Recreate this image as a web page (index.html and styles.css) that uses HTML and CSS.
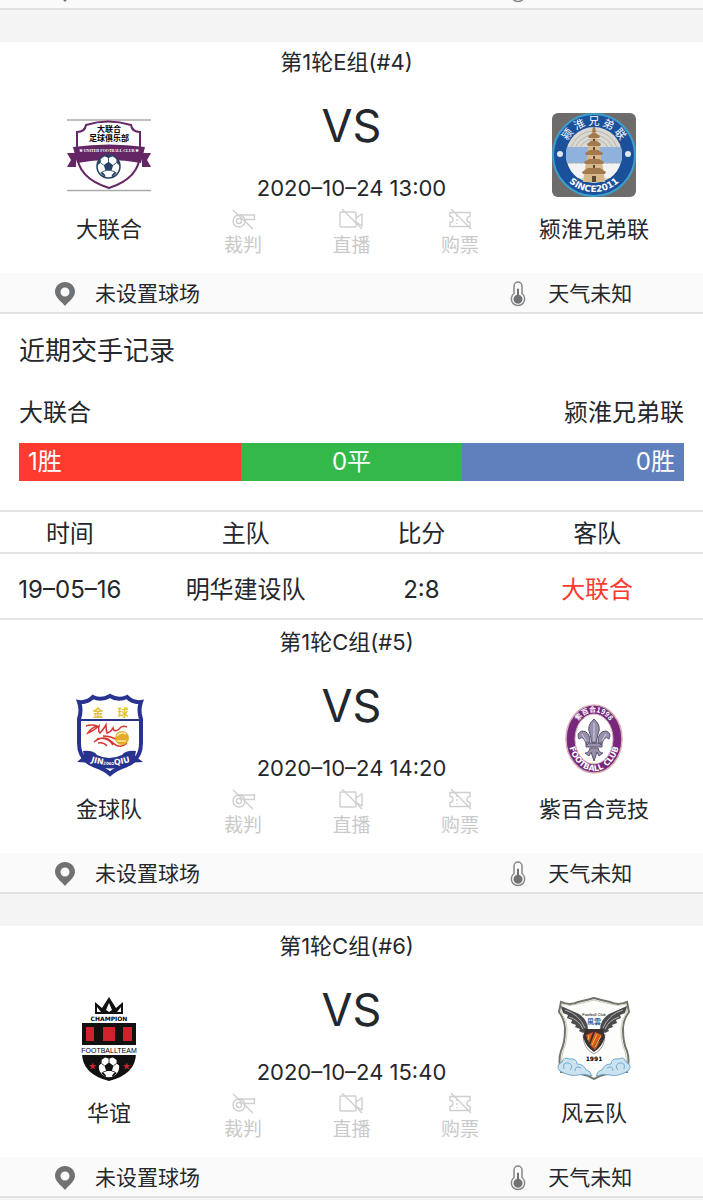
FILE: index.html
```html
<!DOCTYPE html>
<html lang="zh-CN">
<head>
<meta charset="UTF-8">
<meta name="viewport" content="width=device-width, initial-scale=1.0">
<title>赛程</title>
<link rel="stylesheet" href="styles.css">
</head>
<body>

<!-- Shared icons -->
<svg class="sprite" aria-hidden="true">
    <symbol id="pin" viewBox="0 0 20 24">
        <path fill="#707375" fill-rule="evenodd" d="M10 0C4.400 0 0 4.300 0 9.800c0 5.200 5.500 9.200 10 14.200 4.500-5 10-9 10-14.200C20 4.300 15.600 0 10 0zm0 5.500a4.500 4.500 0 1 1 0 9 4.500 4.500 0 0 1 0-9z"/>
    </symbol>
    <symbol id="thermo" viewBox="0 0 16 26">
        <path fill="none" stroke="#858789" stroke-width="1.500" d="M4 12.500V5a4 4 0 0 1 8 0v7.500a6.700 6.700 0 1 1-8 0z"/>
        <path fill="#707375" d="M7 8.500a1 1 0 0 1 2 0v5.300a4.500 4.500 0 1 1-2 0z"/>
    </symbol>
    <symbol id="whistle" viewBox="0 0 26 22">
        <g fill="none" stroke="#cfcfcf" stroke-width="1.400">
            <circle cx="9" cy="12" r="6"/>
            <circle cx="9" cy="12" r="2.500"/>
            <path d="M8 6h16.500v4.500H15M3 1l20 19"/>
        </g>
    </symbol>
    <symbol id="camera" viewBox="0 0 26 22">
        <g fill="none" stroke="#cfcfcf" stroke-width="1.400">
            <rect x="2" y="3" width="16" height="15" rx="1"/>
            <path d="M18 9l6-4v12l-6-4M4 0l20 20"/>
        </g>
    </symbol>
    <symbol id="ticket" viewBox="0 0 26 22">
        <g fill="none" stroke="#cfcfcf" stroke-width="1.400">
            <path d="M3 3.500h20v4a3 3 0 0 0 0 6v4H3v-4a3 3 0 0 0 0-6zM4 0l20 20"/>
            <path stroke-dasharray="2 2" d="M10 6v9"/>
        </g>
    </symbol>
    <symbol id="ball" viewBox="0 0 24 24">
        <circle cx="12" cy="12" r="11" fill="#fff" stroke="currentColor" stroke-width="1.500"/>
        <path fill="currentColor" d="M12 7.500l4.500 3.200-1.700 5.300H9.200l-1.700-5.300zM8 2l4 2 4-2-4-1.200zM1.200 11l3.300-2.500L4.800 4.800 2 8zM22.800 11l-3.300-2.500.3-3.700L22 8zM4.200 18l1.800-1 3 3.500-.5 1.500zM19.800 18l-1.800-1-3 3.500.5 1.500z"/>
        <path fill="none" stroke="currentColor" stroke-width=".8" d="M12 4v4M4.500 8.500l3 2.200M19.500 8.500l-3 2.200M6 17l3.500-1M18 17l-3.500-1"/>
    </symbol>
</svg>

<div class="place place-cut">
    <div class="venue"><svg class="pin"><use href="#pin"/></svg></div>
    <div class="weather"><svg class="thermo"><use href="#thermo"/></svg></div>
</div>

<section class="match">
    <div class="match-main">
        <div class="team">
            <svg class="logo" viewBox="0 0 84 84">
                <path stroke="#aaa" stroke-width="1.500" d="M0 7h84M0 77.500h84"/>
                <path fill="#fff" stroke="#642665" stroke-width="2" d="M19 12q22-7 45 0 1 7 9 7v21q0 25-31 35Q10 65 10 40V19q8 0 9-7z"/>
                <path fill="#642665" d="M0 40h9v14H0l4-7zM84 40h-9v14h9l-4-7z"/>
                <path fill="#642665" d="M6 34q36-5 72 0l-4 16q-32-6-64 0z"/>
                <text class="cjk-bold" font-size="8"><tspan x="42" y="19">大联合</tspan><tspan x="42" y="28">足球俱乐部</tspan></text>
                <text class="logo-serif" x="42" y="39" font-size="4" fill="#fff">★ UNITED FOOTBALL CLUB ★</text>
                <use href="#ball" x="29" y="41" width="25" height="25" color="#254264"/>
            </svg>
            <div class="team-name">大联合</div>
        </div>
        <div class="info">
            <div class="round">第1轮E组(#4)</div>
            <div class="vs">VS</div>
            <div class="time">2020–10–24 13:00</div>
            <div class="extras">
                <div class="extra"><svg><use href="#whistle"/></svg>裁判</div>
                <div class="extra"><svg><use href="#camera"/></svg>直播</div>
                <div class="extra"><svg><use href="#ticket"/></svg>购票</div>
            </div>
        </div>
        <div class="team">
            <svg class="logo" viewBox="0 0 84 84">
                <rect width="84" height="84" rx="6" fill="#6d6c6a"/>
                <circle cx="42" cy="42" r="41" fill="#1b509b" stroke="#3d9fd0" stroke-width="2"/>
                <circle cx="42" cy="42" r="28" fill="#d9d8d3"/>
                <g fill="none" stroke="#bcb6a8">
                    <circle cx="42" cy="42" r="24"/><circle cx="42" cy="42" r="20"/><circle cx="42" cy="42" r="16"/>
                </g>
                <path fill="#8fb2dc" d="M15 34h54q2 8 0 16H15q-2-8 0-16z"/>
                <path fill="#f2f3f4" d="M16 51h52q-3 9-10 14H26q-7-5-10-14z"/>
                <path fill="#d6b88b" d="M40 18h4l1 9 3 8 1 10 2 10 2 14H31l2-14 2-10 1-10 3-8z"/>
                <path fill="#a27a4d" d="M41 14h2l1 5h-4zM36 23l6-4 6 4-1 2H37zM35 31l4-3h6l4 3-1 2H36zM33 40l5-3h8l5 3-1 2H34zM32 49l5-3h10l5 3-1 2H33zM30 59l6-4h12l6 4-1 2H31z"/>
                <path fill="#60452d" d="M41 26h2v2h-2zM41 34h2v3h-2zM41 43h2v3h-2zM41 52h2v3h-2zM40 63h4v6h-4z"/>
                <path id="arc-a" fill="none" d="M12 42a30 30 0 0 1 60 0"/>
                <path id="arc-b" fill="none" d="M5 42a37 37 0 0 0 74 0"/>
                <text class="cjk" font-size="11" fill="#fff"><textPath href="#arc-a" startOffset="50%">颍 淮 兄 弟 联</textPath></text>
                <text class="logo-wide" font-size="9" fill="#fff"><textPath href="#arc-b" startOffset="50%">SINCE2011</textPath></text>
                <circle cx="8" cy="41" r="3" fill="#e2e7ec"/>
                <circle cx="76" cy="41" r="3" fill="#e2e7ec"/>
            </svg>
            <div class="team-name">颍淮兄弟联</div>
        </div>
    </div>
    <div class="place">
        <div class="venue"><svg class="pin"><use href="#pin"/></svg>未设置球场</div>
        <div class="weather"><svg class="thermo"><use href="#thermo"/></svg>天气未知</div>
    </div>
</section>

<!-- Head to head -->
<section class="history">
    <h2>近期交手记录</h2>
    <div class="history-teams">
        <span>大联合</span>
        <span>颍淮兄弟联</span>
    </div>
    <div class="score-bar">
        <div class="win">1胜</div>
        <div class="draw">0平</div>
        <div class="lose">0胜</div>
    </div>
    <table>
        <thead>
            <tr><th>时间</th><th>主队</th><th>比分</th><th>客队</th></tr>
        </thead>
        <tbody>
            <tr><td>19–05–16</td><td>明华建设队</td><td>2:8</td><td class="red">大联合</td></tr>
        </tbody>
    </table>
</section>

<section class="match">
    <div class="match-main">
        <div class="team">
            <svg class="logo" viewBox="0 0 84 84">
                <path fill="#fff" stroke="#28328f" stroke-width="4" d="M12 9q8 1 14-5 8 4 17-1 8 5 17 1 6 6 14 5-3 8 0 17v24q0 16-14 22-12 4-17 9-5-5-17-9-14-6-14-22V26q3-9 0-17z"/>
                <path stroke="#28328f" stroke-width="2" d="M13 27h61"/>
                <text class="cjk-bold" x="31" y="24" font-size="11" fill="#e2bf35">金</text>
                <text class="cjk-bold" x="56" y="24" font-size="11" fill="#e2bf35">球</text>
                <g fill="none" stroke="#d8352f" stroke-width="1.500">
                    <path d="M19 33q6-2 11 0-6 2-9 7 8-4 11-7-1 6 1 7 3-3 6-8 0 5 1 8 4-1 6-5 1 5 6 1 3-4 8-2"/>
                    <path d="M27 49q10-8 18 0t15 1M30 46q10-3 16 6M36 43q8 0 14 4M31 50q6-1 9 3"/>
                </g>
                <circle cx="55" cy="45" r="7" fill="#e3ad29"/>
                <path fill="none" stroke="#fae59b" stroke-width="1.500" d="M50 43q4-5 9-2M50 48h9"/>
                <path fill="#28328f" d="M10 69l7-6-1-5q10-1 14 4 12 6 25 0 4-5 14-4l-1 5 8 6q-9 0-15 2-17 9-35 0-7-2-16-2z"/>
                <path id="arc-c" fill="none" d="M16 66q27 12 55 0"/>
                <text class="logo-wide" font-size="8" fill="#fff"><textPath href="#arc-c" startOffset="50%">JIN<tspan font-size="4">2002</tspan>QIU</textPath></text>
            </svg>
            <div class="team-name">金球队</div>
        </div>
        <div class="info">
            <div class="round">第1轮C组(#5)</div>
            <div class="vs">VS</div>
            <div class="time">2020–10–24 14:20</div>
            <div class="extras">
                <div class="extra"><svg><use href="#whistle"/></svg>裁判</div>
                <div class="extra"><svg><use href="#camera"/></svg>直播</div>
                <div class="extra"><svg><use href="#ticket"/></svg>购票</div>
            </div>
        </div>
        <div class="team">
            <svg class="logo" viewBox="0 0 84 84">
                <ellipse cx="42" cy="46" rx="28" ry="34" fill="#77277c" stroke="#d7b0b8" stroke-width="1.500"/>
                <ellipse cx="42" cy="46" rx="19" ry="25" fill="#fff" stroke="#d7b0b8"/>
                <path fill="#9990ad" stroke="#5d536f" d="M42 26q-8 7-4 15l2 9h4l2-9q4-8-4-15zM38 49q0-11-8-11-6 2-3 8 3-3 5 0l3 6zM46 49q0-11 8-11 6 2 3 8-3-3-5 0l-3 6zM34 50h16v4H34zM38 55q-1 5-5 5l4 3 2-4 3 9 3-9 2 4 4-3q-4 0-5-5z"/>
                <path stroke="#d6d0df" d="M42 30v18M30 41l4 7M54 41l-4 7"/>
                <path id="arc-d" fill="none" d="M21 46a21 27 0 0 1 42 0"/>
                <path id="arc-e" fill="none" d="M15 39a27 39 0 0 0 54 0"/>
                <text class="cjk-bold" font-size="7" fill="#fff"><textPath href="#arc-d" startOffset="50%">紫百合1998</textPath></text>
                <text class="logo-wide" font-size="8" fill="#fff"><textPath href="#arc-e" startOffset="50%">FOOTBALL CLUB</textPath></text>
            </svg>
            <div class="team-name">紫百合竞技</div>
        </div>
    </div>
    <div class="place">
        <div class="venue"><svg class="pin"><use href="#pin"/></svg>未设置球场</div>
        <div class="weather"><svg class="thermo"><use href="#thermo"/></svg>天气未知</div>
    </div>
</section>

<section class="match match-gap">
    <div class="match-main">
        <div class="team">
            <svg class="logo" viewBox="0 0 84 84">
                <path fill="#111" fill-rule="evenodd" d="M28 5l7 6 7-11 7 11 7-6v12H28zM30 10v5h4zM42 6l-3 7 3 2 3-2zM54 10l-4 5h4z"/>
                <text class="logo-wide" x="42" y="24" font-size="6">CHAMPION</text>
                <path fill="#111" d="M15 26h54v30q0 21-27 28Q15 77 15 56z"/>
                <path fill="#d0222a" d="M19 30h8v14h-8zM36 30h12v14H36zM56 30h9v14h-9z"/>
                <path fill="#fff" d="M13 48h58v10H13z"/>
                <text class="logo-plain" x="42" y="56" font-size="7">FOOTBALLTEAM</text>
                <text class="logo-text" x="25" y="71" font-size="7" fill="#d0222a">★</text>
                <text class="logo-text" x="59" y="71" font-size="7" fill="#d0222a">★</text>
                <use href="#ball" x="30" y="58" width="24" height="24" color="#111"/>
            </svg>
            <div class="team-name">华谊</div>
        </div>
        <div class="info">
            <div class="round">第1轮C组(#6)</div>
            <div class="vs">VS</div>
            <div class="time">2020–10–24 15:40</div>
            <div class="extras">
                <div class="extra"><svg><use href="#whistle"/></svg>裁判</div>
                <div class="extra"><svg><use href="#camera"/></svg>直播</div>
                <div class="extra"><svg><use href="#ticket"/></svg>购票</div>
            </div>
        </div>
        <div class="team">
            <svg class="logo" viewBox="0 0 84 84">
                <path fill="#fdfdfb" stroke="#70756a" stroke-width="2" d="M9 5q9 4 17 0 9-2 16-4 7 2 16 4 8 4 17 0l2 10q-6 8-6 17 0 14 4 22 3 9 0 21-12 0-20 2-7 1-13 5-6-4-13-5-8-2-20-2-3-12 0-21 4-8 4-22 0-9-6-17z"/>
                <path fill="none" stroke="#c9cbbb" d="M10 7q8 3 16 0 9-2 16-4 7 2 16 4 8 3 16 0l1 8q-6 8-6 17 0 14 4 22 3 9 0 19M10 7l-1 8q6 8 6 17 0 14-4 22-3 9 0 19"/>
                <path fill="#4b4b4d" d="M9 9l18 8q9 6 9 16l-5 3-4-2 1-2-5-2 1-2-5-2 1-3-5-2 1-3-5-2zM75 9l-18 8q-9 6-9 16l5 3 4-2-1-2 5-2-1-2 5-2-1-3 5-2-1-3 5-2z"/>
                <path fill="none" stroke="#b0b0ae" d="M13 13q14 4 20 18M17 20q10 3 14 12M71 13q-14 4-20 18M67 20q-10 3-14 12"/>
                <path fill="#fff" stroke="#999" d="M31 37q0 15 11 20 11-5 11-20"/>
                <path fill="#3a3030" d="M33 32h18l2 8q-3 10-11 15-8-5-11-15z"/>
                <path fill="#d85b22" d="M34 38l7-3-4 11zM43 35l7 3-9 13-3-3zM49 43l-6 10-2-2z"/>
                <path stroke="#f0bd42" d="M45 37l-5 11M49 39l-6 11M37 38l-1 5"/>
                <text class="logo-plain" x="42" y="19" font-size="4">Football Club</text>
                <text class="cjk-bold" x="42" y="27" font-size="7" fill="#34659d">風雲</text>
                <text class="logo-wide" x="42" y="64" font-size="6">1991</text>
                <g fill="#cbe3f0" stroke="#73a9cc">
                    <path d="M8 74q-5-5 2-9 2-6 7-3 8-1 8 5 7 0 9 6 4 0 6 6-8-3-14-1-7 2-18-4zM76 74q5-5-2-9-2-6-7-3-8-1-8 5-7 0-9 6-4 0-6 6 8-3 14-1 7 2 18-4z"/>
                    <path fill="none" d="M12 72q-2-7 5-6 5 3 1 7M23 74q0-6 6-3M72 72q2-7-5-6-5 3-1 7M61 74q0-6-6-3"/>
                </g>
            </svg>
            <div class="team-name">风云队</div>
        </div>
    </div>
    <div class="place">
        <div class="venue"><svg class="pin"><use href="#pin"/></svg>未设置球场</div>
        <div class="weather"><svg class="thermo"><use href="#thermo"/></svg>天气未知</div>
    </div>
</section>

</body>
</html>
```
FILE: styles.css
```css
* {
    box-sizing: border-box;
}
body {
    margin: 0;
    background-color: #f4f4f4;
    color: #24272b;
    font-family: Inter, "Noto Sans CJK SC", sans-serif;
}
.sprite {
    display: none;
}

/* Match card */
.match {
    background-color: #fff;
}
.match-gap,
.place-cut + .match {
    margin-top: 32px;
}
.match-main {
    display: grid;
    grid-template-columns: 31fr 38fr 31fr;
    padding-bottom: 13px;
}
.team {
    display: flex;
    flex-direction: column;
    align-items: center;
    padding-top: 71px;
}
.logo {
    width: 84px;
    height: 84px;
}
.team-name {
    margin-top: 16px;
    font-size: 22px;
    line-height: 32px;
}
.info {
    text-align: center;
}
.round {
    padding-right: 10px;
    font-size: 22px;
    line-height: 40px;
}
.vs {
    margin-top: 16px;
    font-size: 45px;
    line-height: 56px;
}
.time {
    margin-top: 20px;
    font-size: 22px;
    line-height: 28px;
}
.extras {
    display: flex;
    justify-content: space-between;
    padding: 0 6px;
    margin-top: 7px;
}
.extra {
    display: flex;
    flex-direction: column;
    align-items: center;
    gap: 1px;
    color: #c9c9c9;
    font-size: 19px;
    line-height: 28px;
}
.extra svg {
    width: 26px;
    height: 22px;
}

/* Venue and weather */
.place {
    display: flex;
    height: 41px;
    background-color: #fafafa;
    border-bottom: 2px solid #e2e2e2;
    font-family: "Noto Sans CJK SC", sans-serif;
    font-size: 21px;
    line-height: 28px;
}
.place-cut {
    height: 10px;
    align-items: flex-end;
    overflow: hidden;
}
.venue,
.weather {
    display: flex;
    align-items: center;
    height: 39px;
    padding-bottom: 2px;
    flex-shrink: 0;
}
.venue {
    width: 72%;
    padding-left: 55px;
    gap: 20px;
}
.weather {
    padding-left: 4px;
    gap: 22px;
}
.pin,
.thermo {
    margin-top: 4px;
}
.pin {
    width: 20px;
    height: 24px;
}
.thermo {
    width: 16px;
    height: 26px;
}

/* Head to head */
.history {
    background-color: #fff;
    padding: 18px 0 2px;
    font-size: 24px;
}
.history h2 {
    margin: 0 19px;
    font-size: 26px;
    font-weight: 400;
    line-height: 38px;
}
.history-teams {
    display: flex;
    justify-content: space-between;
    margin: 24px 19px 11px;
    line-height: 38px;
}
.score-bar {
    display: grid;
    grid-template-columns: repeat(3, 1fr);
    margin: 0 19px 29px;
    color: #fff;
    line-height: 38px;
}
.score-bar div {
    padding: 0 9px;
}
.win {
    background-color: #ff3b2f;
}
.draw {
    background-color: #34b84a;
    text-align: center;
}
.lose {
    background-color: #5f80bd;
    text-align: right;
}
table {
    width: 100%;
    table-layout: fixed;
    border-collapse: collapse;
    text-align: center;
    line-height: 28px;
}
th,
td {
    padding: 4px 36px 0 0;
    font-weight: 400;
    white-space: nowrap;
    border-bottom: 2px solid #e4e4e4;
}
th {
    height: 42px;
    border-top: 2px solid #e4e4e4;
}
td {
    height: 66px;
    padding-top: 8px;
}
.red {
    color: #ff3b30;
}

/* Lettering inside the club logos */
.logo text {
    text-anchor: middle;
}
.cjk,
.cjk-bold {
    font-family: "Noto Sans CJK SC", sans-serif;
}
.cjk-bold,
.logo-text,
.logo-wide,
.logo-serif {
    font-weight: 700;
}
.logo-text,
.logo-plain {
    font-family: "Liberation Sans", sans-serif;
}
.logo-wide {
    font-family: "DejaVu Sans", sans-serif;
}
.logo-serif {
    font-family: "Liberation Serif", serif;
}
```
